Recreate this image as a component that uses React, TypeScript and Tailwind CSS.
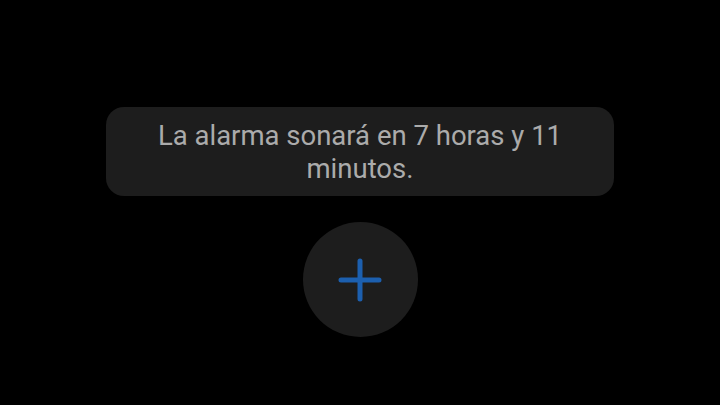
const PlusIcon = () => (
  <svg viewBox="0 0 44 44" className="h-[44px] w-[44px]" fill="none">
    <path
      d="M22 3v38M3 22h38"
      stroke="#1c5fae"
      strokeWidth="5"
      strokeLinecap="round"
    />
  </svg>
);

export default function App() {
  return (
    <div
      className="flex h-[405px] w-[720px] flex-col items-center bg-black pt-[107px]"
      style={{ fontFamily: "Roboto, 'Noto Sans', sans-serif" }}
    >
      <div className="flex h-[89px] w-[508px] items-center justify-center rounded-[18px] bg-[#1d1d1d] px-[46px] text-center text-[27.5px] leading-[33px] text-[#ababab]">
        La alarma sonará en 7 horas y 11 minutos.
      </div>
      <button
        type="button"
        className="mt-[26px] flex h-[115px] w-[115px] items-center justify-center rounded-full bg-[#1d1d1d]"
      >
        <PlusIcon />
      </button>
    </div>
  );
}
